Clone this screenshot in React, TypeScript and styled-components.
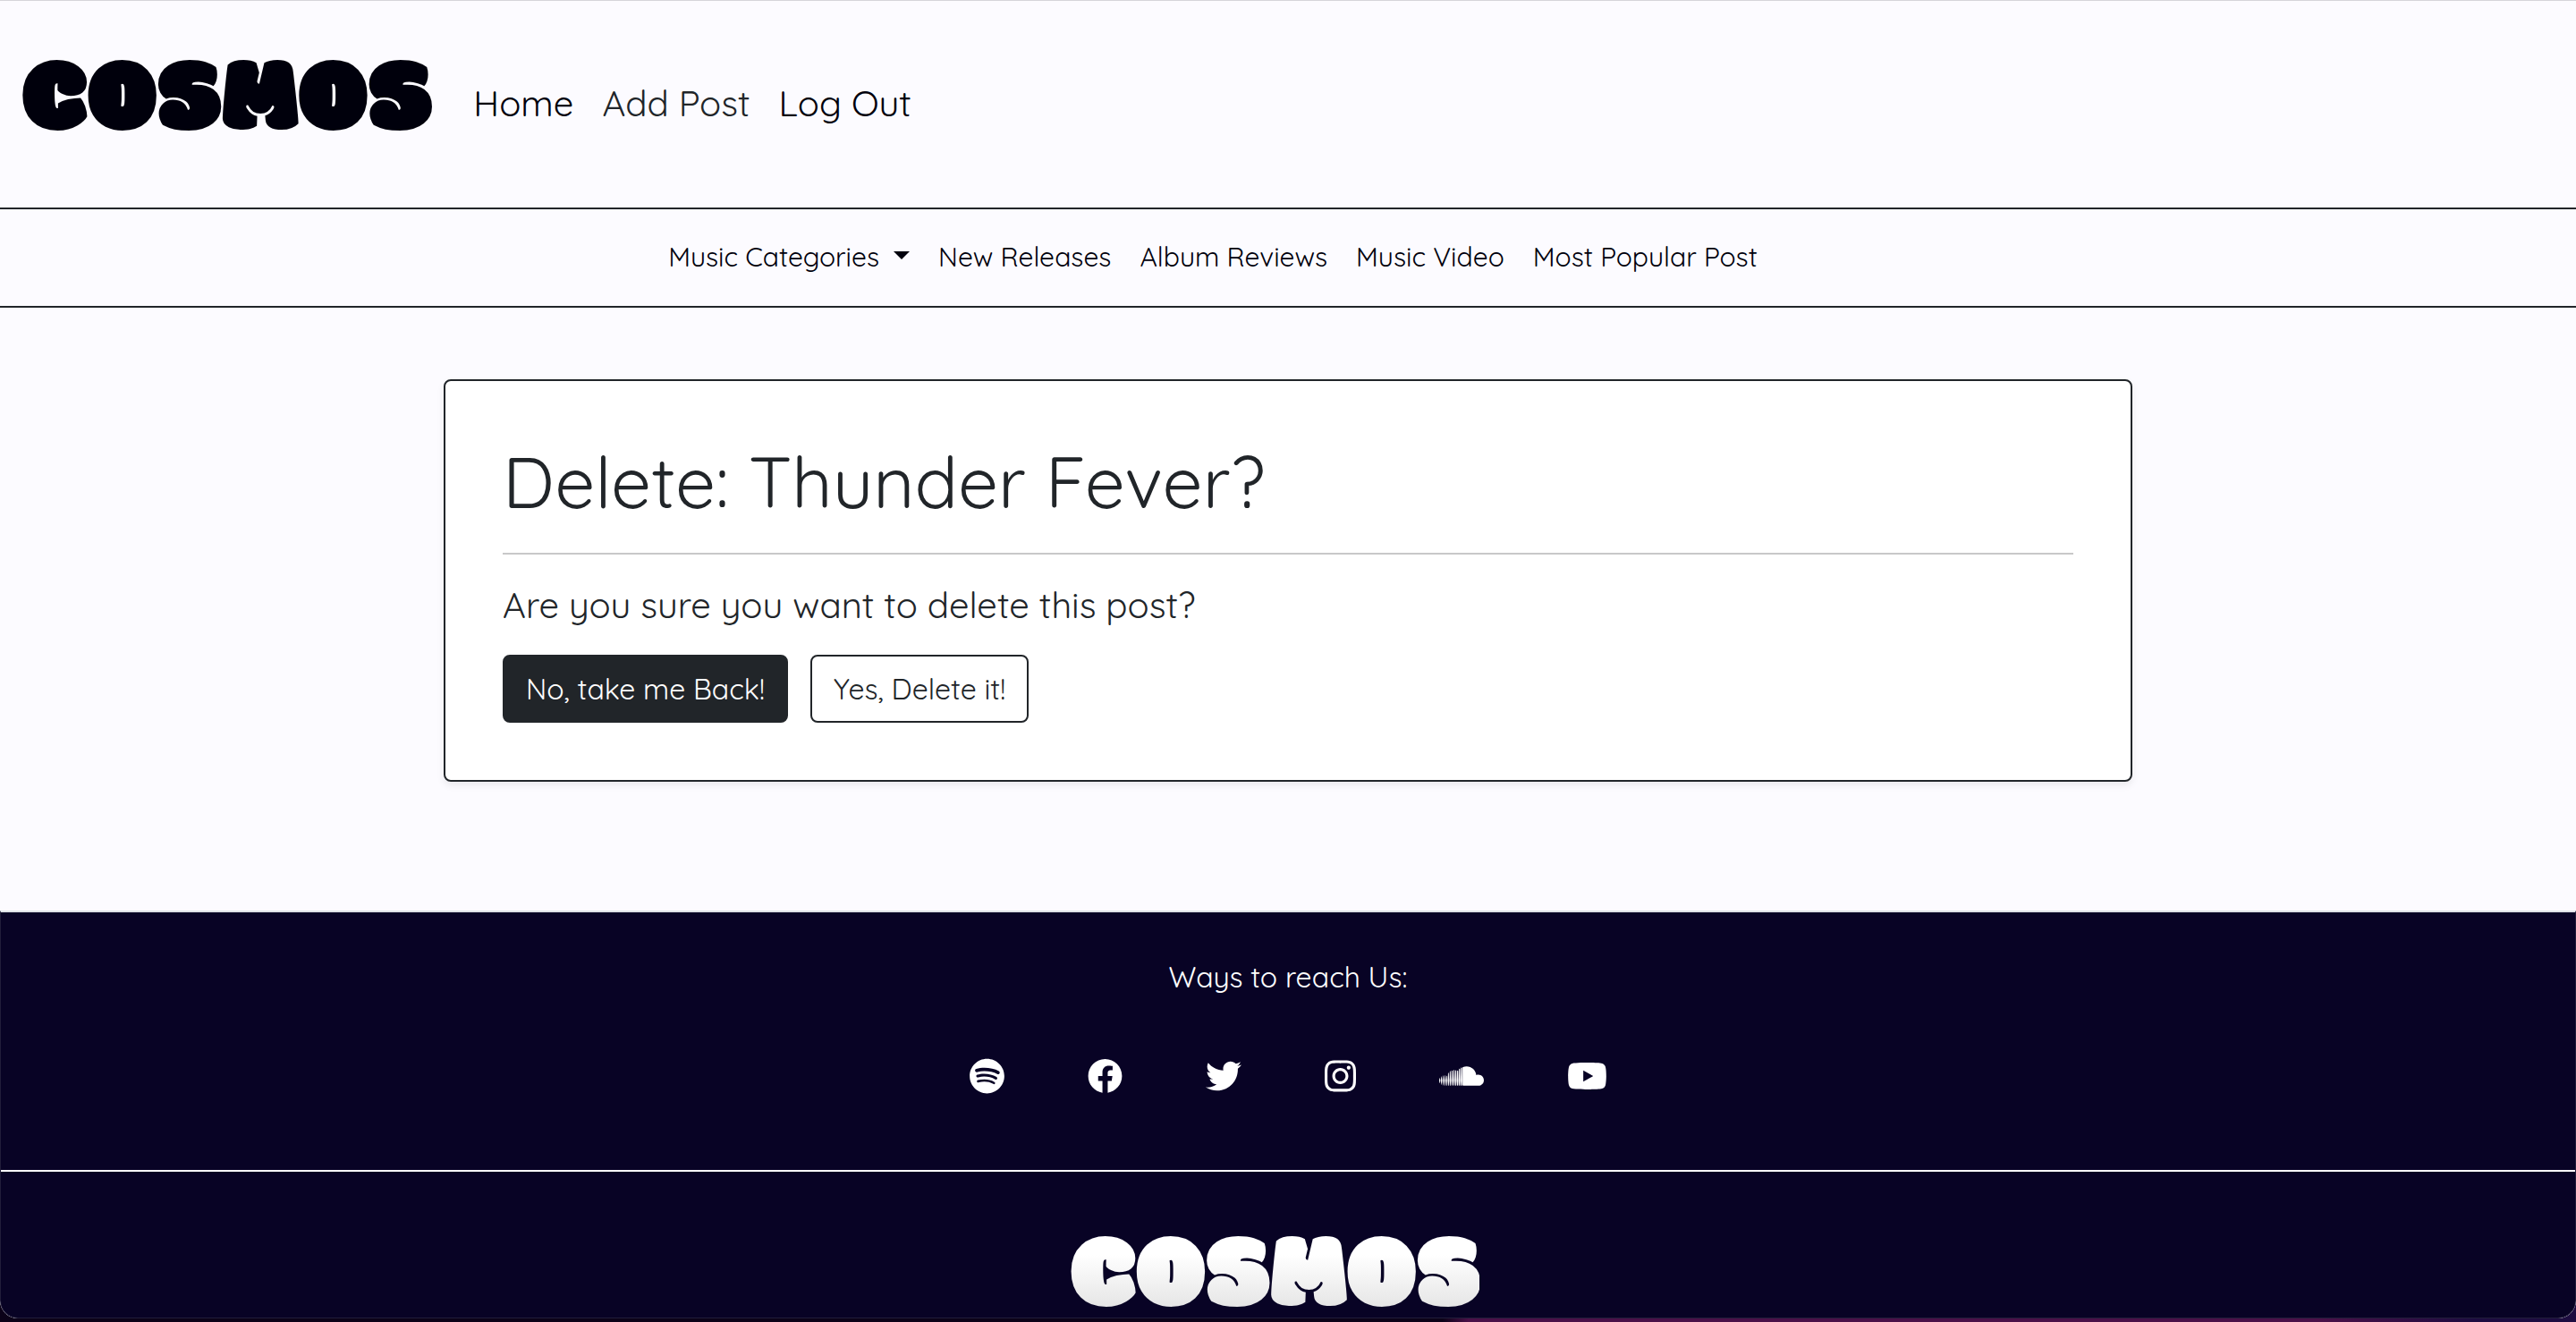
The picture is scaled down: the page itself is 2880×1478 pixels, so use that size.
import React from "react";
import styled, { createGlobalStyle, css } from "styled-components";
import { FaFacebook, FaInstagram, FaSoundcloud, FaSpotify, FaTwitter, FaYoutube } from "react-icons/fa";

const GlobalStyle = createGlobalStyle`
  *, *::before, *::after { box-sizing: border-box; }
  body {
    margin: 0;
    background: #0b0218;
    color: #212529;
    font-family: Quicksand, Lato, sans-serif;
    font-size: 32px;
    line-height: 48px;
  }
  h1, h2, p, ul { margin: 0; padding: 0; font-weight: 400; }
  a { color: inherit; text-decoration: none; }
`;

const Desktop = styled.div`
  min-height: 100vh;
  display: flex;
  flex-direction: column;
  padding-bottom: 4px;
  background: linear-gradient(90deg, #0b0218 0 56%, #4a1048 57% 90%, #1d0c40 96%);
`;

const Window = styled.div`
  flex: 1;
  display: flex;
  flex-direction: column;
  overflow: hidden;
  border-top: 1px solid #d6d5da;
  border-radius: 0 0 20px 20px;
  background: #fcfbff;
`;

const Header = styled.header`
  display: flex;
  align-items: center;
  gap: 48px;
  height: 233px;
  padding: 0 24px 4px;
  border-bottom: 2px solid #212529;
`;

const Wordmark = styled.span<{ $light?: boolean }>`
  display: block;
  font-family: Modak, Inter, sans-serif;
  font-size: 120px;
  line-height: 80px;
  color: #00000c;
  ${(p) => p.$light && css`
    padding-top: 16px;
    color: transparent;
    background: linear-gradient(#fff 30%, #e4e4e4 95%);
    background-clip: text;
  `}
`;

const MainNav = styled.nav`
  display: flex;
  gap: 32px;
  font-size: 40px;
  color: #00000c;
`;

const NavLink = styled.a<{ $muted?: boolean }>`
  color: ${(p) => (p.$muted ? "#212529" : "inherit")};
`;

const SubNav = styled.nav`
  display: flex;
  justify-content: center;
  align-items: center;
  gap: 32px;
  height: 110px;
  padding: 0 168px 2px 0;
  border-bottom: 2px solid #212529;
  font-size: 30px;
  color: #00000c;
`;

const MenuButton = styled.button`
  display: flex;
  align-items: center;
  gap: 16px;
  padding: 0;
  border: 0;
  background: none;
  font: inherit;
  color: inherit;

  &::after {
    content: "";
    margin-bottom: 4px;
    border: 9px solid transparent;
    border-top-color: currentColor;
    border-bottom: 0;
  }
`;

const Main = styled.main`
  width: 66.6667%;
  margin: 0 auto;
  padding: 80px 16px 144px;
`;

const Card = styled.section`
  padding: 64px;
  border: 2px solid #212529;
  border-radius: 8px;
  background: #fff;
  box-shadow: 0 4px 8px rgba(0, 0, 0, 0.075);
`;

const Title = styled.h1`
  font-size: 80px;
  line-height: 96px;
`;

const Divider = styled.hr`
  height: 2px;
  margin: 32px 0;
  border: 0;
  background: #c8c8c9;
`;

const Question = styled.h2`
  font-size: 40px;
  line-height: 48px;
`;

const Actions = styled.div`
  display: flex;
  gap: 25px;
  margin-top: 32px;
`;

const Button = styled.button<{ $filled?: boolean }>`
  padding: 12px 24px;
  border: 2px solid #212529;
  border-radius: 8px;
  font: inherit;
  background: ${(p) => (p.$filled ? "#212529" : "#fff")};
  color: ${(p) => (p.$filled ? "#fff" : "#212529")};
`;

const Footer = styled.footer`
  flex: 1;
  border: 1px solid #211d3a;
  border-top: 2px solid #dee2e6;
  border-radius: 0 0 20px 20px;
  background: #080325;
  color: #fff;
  text-align: center;
`;

const Contact = styled.section`
  padding: 48px 0 85px;
  border-bottom: 2px solid #fff;
`;

const Socials = styled.ul`
  display: flex;
  justify-content: center;
  gap: 93px;
  margin-top: 67px;
  list-style: none;
`;

const SocialLink = styled.a<{ $width: number }>`
  display: block;

  svg {
    display: block;
    width: ${(p) => p.$width}px;
    height: 40px;
  }
`;

const FooterBrand = styled.div`
  display: flex;
  justify-content: center;
  padding: 64px 30px 0 0;
`;

const subLinks = ["New Releases", "Album Reviews", "Music Video", "Most Popular Post"];

const socials = [
  { name: "Spotify", Icon: FaSpotify, width: 39 },
  { name: "Facebook", Icon: FaFacebook, width: 39 },
  { name: "Twitter", Icon: FaTwitter, width: 40 },
  { name: "Instagram", Icon: FaInstagram, width: 35 },
  { name: "SoundCloud", Icon: FaSoundcloud, width: 50 },
  { name: "YouTube", Icon: FaYoutube, width: 45 },
];

export default function App() {
  return (
    <>
      <GlobalStyle />
      <Desktop>
        <Window>
          <Header>
            <a href="#home"><Wordmark>COSMOS</Wordmark></a>
            <MainNav>
              <NavLink href="#home">Home</NavLink>
              <NavLink href="#add" $muted>Add Post</NavLink>
              <NavLink href="#logout">Log Out</NavLink>
            </MainNav>
          </Header>
          <SubNav>
            <MenuButton type="button" aria-haspopup="true">Music Categories</MenuButton>
            {subLinks.map((label) => (
              <NavLink key={label} href="#posts">{label}</NavLink>
            ))}
          </SubNav>
          <Main>
            <Card>
              <Title>Delete: Thunder Fever?</Title>
              <Divider />
              <Question>Are you sure you want to delete this post?</Question>
              <Actions>
                <Button type="button" $filled>No, take me Back!</Button>
                <Button type="submit">Yes, Delete it!</Button>
              </Actions>
            </Card>
          </Main>
          <Footer>
            <Contact>
              <p>Ways to reach Us:</p>
              <Socials>
                {socials.map(({ name, Icon, width }) => (
                  <li key={name}>
                    <SocialLink href="#social" aria-label={name} $width={width}><Icon /></SocialLink>
                  </li>
                ))}
              </Socials>
            </Contact>
            <FooterBrand><Wordmark $light>COSMOS</Wordmark></FooterBrand>
          </Footer>
        </Window>
      </Desktop>
    </>
  );
}
